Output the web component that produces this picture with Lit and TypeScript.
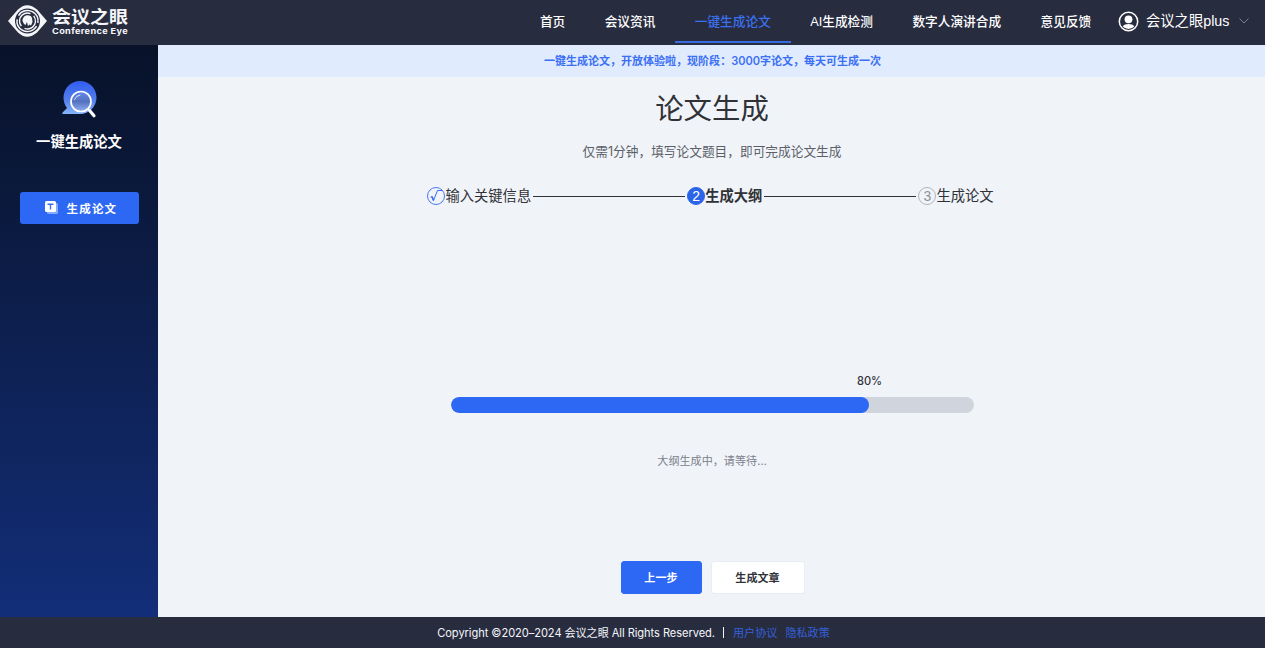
import { LitElement, html, svg, css } from "lit";
import { customElement, state } from "lit/decorators.js";
import { classMap } from "lit/directives/class-map.js";

@customElement("app-root")
export class AppRoot extends LitElement {
  static styles = css`
    :host {
      display: grid;
      grid-template-rows: 45px 572px 31px;
      grid-template-columns: 158px 1fr;
      width: 100%;
      height: 648px;
      overflow: hidden;
      font-family: Inter, "Noto Sans CJK SC", sans-serif;
      color: #303238;
      background: #f0f4f9;
      white-space: nowrap;
    }
    svg { display: block; flex: none; }
    .header {
      grid-column: 1 / 3;
      display: flex;
      background: #282c3f;
      color: #fff;
      font-family: "Liberation Sans", "Noto Sans CJK SC", sans-serif;
      font-size: 12.7px;
    }
    .nav { display: flex; margin-left: auto; height: 43px; }
    .nav a {
      box-sizing: border-box;
      padding: 0 19.7px;
      line-height: 44px;
      height: 43px;
      font-weight: 500;
      border-bottom: 2px solid transparent;
    }
    .nav a.active { color: #3b70f0; border-color: #386be0; }
    .user { display: flex; align-items: center; height: 42px; width: 147px; margin-left: 7px; font-size: 14.3px; }
    .user span { margin: 0 10px 0 7px; line-height: 20px; padding-bottom: 1px; }
    .side {
      display: flex;
      flex-direction: column;
      align-items: center;
      background: linear-gradient(#081229, #0b1a40 32%, #122d75 96%, #132f7b);
      color: #fff;
    }
    .mark { margin-top: 34px; }
    .side h2 { margin: 9px 0 0; font-size: 14.3px; line-height: 24px; font-weight: 700; }
    .side button {
      display: flex;
      align-items: center;
      width: 119px;
      height: 32px;
      margin-top: 38px;
      padding: 0 0 1px 25px;
      gap: 9px;
      border: 0;
      border-radius: 3px;
      background: #2d68f5;
      color: #fff;
      font: 700 11.5px "Noto Sans CJK SC", sans-serif;
      letter-spacing: 1.2px;
    }
    .main { display: flex; flex-direction: column; align-items: center; padding-left: 1px; }
    .banner {
      align-self: stretch;
      height: 32px;
      margin-left: -1px;
      padding-left: 2px;
      line-height: 32px;
      text-align: center;
      color: #3b70f5;
      background: #e0ebfd;
      font-size: 11.03px;
      font-weight: 600;
    }
    h1 { margin: 11px 0 0; font-size: 28.4px; line-height: 42px; font-weight: 400; }
    .sub { margin-top: 2px; color: #5c5f68; font-size: 12.7px; line-height: 40px; height: 40px; }
    .steps { display: flex; align-items: center; margin-top: 7px; height: 34px; margin-right: 3px; font-size: 14.3px; }
    .step { display: flex; align-items: center; }
    .step > span:last-child { line-height: 20px; padding-bottom: 1px; }
    .step.current { font-weight: 700; }
    .num {
      box-sizing: border-box;
      width: 18px;
      height: 18px;
      border-radius: 50%;
      border: 1px solid #b1b5bd;
      color: #8d9198;
      font: 400 14px/16px "Liberation Sans", sans-serif;
      text-align: center;
    }
    .num.done { border-color: #4a78f5; color: #3b6cf2; }
    .num.now { border-color: #2b64e8; background: #2b64e8; color: #fff; }
    .line { width: 152px; height: 1px; margin: 0 2px; background: #303238; }
    .progress { width: 523px; margin-top: 159px; }
    .percent { display: flex; justify-content: flex-end; height: 25px; font-size: 11.1px; line-height: 18px; font-weight: 500; }
    .percent span { width: 50px; text-align: center; margin-right: 79px; }
    .track { height: 16px; border-radius: 8px; background: #d0d4dc; overflow: hidden; }
    .fill { height: 16px; border-radius: 8px; background: #2d68f5; }
    .wait { margin-top: 38px; color: #7c808b; font-size: 11.1px; line-height: 20px; }
    .actions { display: flex; gap: 9px; margin-top: 90px; padding-left: 1px; }
    .actions button {
      box-sizing: border-box;
      height: 33px;
      width: 94px;
      padding: 0 0 2px;
      border: 1px solid #e8ecf3;
      border-radius: 3px;
      background: #fff;
      color: #303238;
      font: 700 11.1px "Noto Sans CJK SC", sans-serif;
    }
    .actions .primary { width: 81px; background: #2d68f5; border-color: #2d68f5; color: #fff; }
    .footer {
      grid-column: 1 / 3;
      display: flex;
      align-items: center;
      justify-content: center;
      padding: 0 0 1px 2px;
      height: 30px;
      background: #282c3f;
      color: #f5f6fa;
      font-size: 11.1px;
    }
    .footer span { letter-spacing: -.06px; }
    .footer i { width: 1px; height: 11px; margin: 0 9px 0 8px; background: #f5f6fa; }
    .footer a { color: #3560d8; margin-right: 8px; }
    .footer a:last-child { margin-right: 0; }
  `;

  @state() private percent = 80;

  private nav = ["首页", "会议资讯", "一键生成论文", "AI生成检测", "数字人演讲合成", "意见反馈"];

  private logo() {
    return svg`<svg width="136" height="43" viewBox="0 0 136 43">
      <path d="M8 21Q14 14 18 9.500Q27 1 37 9.500Q41 14 47 21Q41 28 37 32.500Q27 41 18 32.500Q14 28 8 21Z" fill="#f5f6fa"/>
      <circle cx="27.500" cy="21" r="12.500" fill="#282c3f"/>
      <circle cx="27.500" cy="21" r="10.500" fill="none" stroke="#f5f6fa" stroke-width="1.500" stroke-dasharray="29 4" transform="rotate(30 27.500 21)"/>
      <circle cx="27.500" cy="21" r="8" fill="none" stroke="#f5f6fa" stroke-width="1.400" stroke-dasharray="21 4" transform="rotate(-40 27.500 21)"/>
      <path d="M22.500 21C22.500 14 31 14 32 18L32.500 22L31 25.500L29 24.500L28 26.500L27 22L25.500 25L24 24Z" fill="#f5f6fa"/>
      <text x="52" y="22.500" textLength="76" lengthAdjust="spacingAndGlyphs" fill="#f5f6fa" font-family="Noto Sans CJK SC, sans-serif" font-weight="700" font-size="17.500">会议之眼</text>
      <text x="52" y="33.800" textLength="76" lengthAdjust="spacingAndGlyphs" fill="#f5f6fa" font-family="Inter, sans-serif" font-weight="700" font-size="8" letter-spacing=".3">Conference Eye</text>
    </svg>`;
  }

  private mark() {
    return svg`<svg class="mark" width="40" height="42" viewBox="0 0 40 42">
      <defs><linearGradient id="bubble" x1="0" y1="0" x2="0" y2="1"><stop offset="0" stop-color="#315cf0"/><stop offset=".6" stop-color="#5580ed"/><stop offset="1" stop-color="#86b5fa"/></linearGradient>
      <linearGradient id="lens" x1="0" y1="0" x2="0" y2="1"><stop offset="0" stop-color="#6289ee"/><stop offset=".5" stop-color="#5672bd"/><stop offset="1" stop-color="#8fb0f5"/></linearGradient></defs>
      <path d="M21 2A16.500 16.500 0 1 1 21 35H3.500Q2.500 34 4.500 32.500L8 29Q4.500 24.500 4.500 18.500A16.500 16.500 0 0 1 21 2Z" fill="url(#bubble)"/>
      <circle cx="22" cy="22.500" r="10" fill="url(#lens)" stroke="#fff" stroke-width="1.700"/>
      <path d="M15.500 20.500Q17 16.500 21 16" fill="none" stroke="#dce6ff" stroke-width="1" stroke-linecap="round"/>
      <path d="M29 30L31 32" stroke="#fff" stroke-width="2"/><path d="M31 32L35 36.800" stroke="#fff" stroke-width="3.200" stroke-linecap="round"/>
    </svg>`;
  }

  render() {
    return html`
      <header class="header">
        ${this.logo()}
        <nav class="nav">${this.nav.map((t, i) => html`<a class=${classMap({ active: i === 2 })}>${t}</a>`)}</nav>
        <div class="user">
          <svg width="21" height="21" viewBox="0 0 21 21"><circle cx="10.500" cy="10.500" r="9.200" fill="none" stroke="#fff" stroke-width="1.500"/><circle cx="10.500" cy="8.300" r="3.900" fill="#fff"/><path d="M4.500 15.300Q6.500 13 10.500 13T16.500 15.300Q14 18 10.500 18T4.500 15.300Z" fill="#fff"/></svg>
          <span>会议之眼plus</span>
          <svg width="10" height="6" viewBox="0 0 10 6"><path d="M.5 .5L5 5L9.500 .5" fill="none" stroke="#7d8292"/></svg>
        </div>
      </header>
      <aside class="side">
        ${this.mark()}
        <h2>一键生成论文</h2>
        <button>
          <svg width="13" height="13" viewBox="0 0 13 13"><rect x="2" y="2" width="11" height="11" rx="1.500" fill="#86aafb"/><rect width="11" height="11" rx="1.500" fill="#fff"/><path d="M2.500 3.300H8.500M5.500 3.300V8.500" stroke="#3d6ee8" stroke-width="1.400"/></svg>
          <span>生成论文</span>
        </button>
      </aside>
      <main class="main">
        <div class="banner">一键生成论文，开放体验啦，现阶段：3000字论文，每天可生成一次</div>
        <h1>论文生成</h1>
        <div class="sub">仅需1分钟，填写论文题目，即可完成论文生成</div>
        <div class="steps">
          <div class="step">
            <span class="num done"><svg width="16" height="16" viewBox="0 0 16 16"><path d="M2.500 9.300L4 8.500L5.500 12.500L9.500 2.500H14.500" fill="none" stroke="#3b6cf2" stroke-width="1"/><path d="M4 8.500L5.500 12.500" stroke="#3b6cf2" stroke-width="1.700"/></svg></span>
            <span>输入关键信息</span>
          </div>
          <div class="line"></div>
          <div class="step current"><span class="num now">2</span><span>生成大纲</span></div>
          <div class="line"></div>
          <div class="step"><span class="num">3</span><span>生成论文</span></div>
        </div>
        <div class="progress">
          <div class="percent"><span>${this.percent}%</span></div>
          <div class="track"><div class="fill" style="width:${this.percent}%"></div></div>
        </div>
        <div class="wait">大纲生成中，请等待…</div>
        <div class="actions"><button class="primary">上一步</button><button>生成文章</button></div>
      </main>
      <footer class="footer">
        <span>Copyright ©2020–2024 会议之眼 All Rights Reserved.</span><i></i><a>用户协议</a><a>隐私政策</a>
      </footer>`;
  }
}
